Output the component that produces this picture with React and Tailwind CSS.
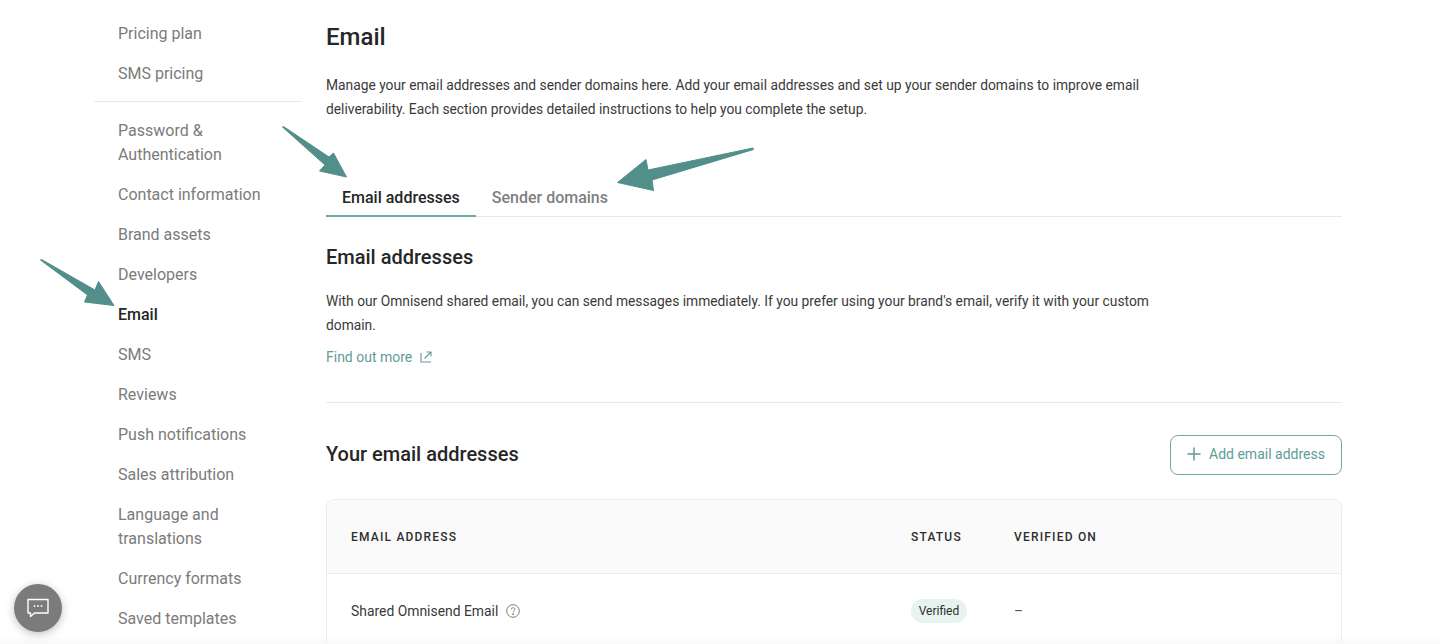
const TOP_LINKS = ['Pricing plan', 'SMS pricing']

const LINKS = [
  'Password & Authentication',
  'Contact information',
  'Brand assets',
  'Developers',
  'Email',
  'SMS',
  'Reviews',
  'Push notifications',
  'Sales attribution',
  'Language and translations',
  'Currency formats',
  'Saved templates',
]

function SideLink({ label }) {
  const active = label === 'Email'
  return (
    <a className={`block px-6 py-2 text-base leading-6 ${active ? 'font-medium text-[#262626]' : 'text-[#7b7b7b]'}`}>
      {label}
    </a>
  )
}

function Sidebar() {
  return (
    <nav className="w-[208px] ml-[94px] mr-6 shrink-0 pt-[14px]">
      {TOP_LINKS.map((l) => (
        <SideLink key={l} label={l} />
      ))}
      <div className="mt-[7px] mb-[9px] border-t border-[#e8e8e8]" />
      {LINKS.map((l) => (
        <SideLink key={l} label={l} />
      ))}
    </nav>
  )
}

function Arrows() {
  return (
    <svg className="absolute left-0 top-0 pointer-events-none" width="1440" height="644" fill="#528f8b" stroke="#528f8b" strokeWidth="1" strokeLinejoin="round">
      <path d="M282.5 127 L283.5 126.5 L329 157 L333.5 153 L346.5 177 L319.5 171 L325 165 Z" />
      <path d="M753 148 L753.5 149.5 L652 180 L653.5 190.5 L617.5 182.5 L646 159.5 L648 170 Z" />
      <path d="M40.5 260 L41.5 259.5 L95 290 L98.5 281.5 L114 305.5 L84.5 302 L87.5 295 Z" />
    </svg>
  )
}

function ChatButton() {
  return (
    <div className="absolute left-[14px] top-[584px] w-12 h-12 rounded-full bg-[#7b7b7b] shadow-[0_2px_8px_rgba(0,0,0,0.25)] flex items-center justify-center">
      <svg width="24" height="22" viewBox="0 0 24 22" fill="none" stroke="white" strokeWidth="1.4">
        <path d="M2 2.5 H22 V16 H8.5 L4.5 19.5 V16 H2 Z" strokeLinejoin="round" />
        <circle cx="8.5" cy="9" r="0.9" fill="white" stroke="none" />
        <circle cx="12" cy="9" r="0.9" fill="white" stroke="none" />
        <circle cx="15.5" cy="9" r="0.9" fill="white" stroke="none" />
      </svg>
    </div>
  )
}

function Main() {
  return (
    <main className="w-[1016px] shrink-0">
      <h1 className="mt-[19px] text-2xl leading-9 font-medium text-[#262626]">Email</h1>
      <p className="mt-[18px] w-[860px] text-[13.8px] leading-6 text-[#3a3a3a]">
        Manage your email addresses and sender domains here. Add your email addresses and set up your sender domains to improve email deliverability. Each section provides detailed instructions to help you complete the setup.
      </p>

      {/* Tabs */}
      <div className="mt-[65px] flex border-b border-[#e8e8e8]">
        <div className="px-4 pb-[5px] text-base leading-6 font-medium text-[#262626] border-b-2 border-[#6fa9a5] -mb-px">
          Email addresses
        </div>
        <div className="px-4 pb-[5px] text-base leading-6 font-medium text-[#808080]">Sender domains</div>
      </div>

      <h2 className="mt-6 text-xl leading-8 font-medium text-[#262626]">Email addresses</h2>
      <p className="mt-[16px] w-[860px] text-[13.8px] leading-6 text-[#3a3a3a]">
        With our Omnisend shared email, you can send messages immediately. If you prefer using your brand's email, verify it with your custom domain.
      </p>
      <a className="mt-2 flex items-center gap-2 text-sm leading-6 text-[#5f9c98]">
        Find out more
        <svg width="12" height="12" viewBox="0 0 12 12" fill="none" stroke="#5f9c98" strokeWidth="1.1">
          <path d="M1 2 V11 H11" />
          <path d="M4.5 7.5 L11 1 M6.5 1 H11 V5.5" />
        </svg>
      </a>

      <div className="mt-[33px] border-t border-[#e8e8e8]" />

      <div className="mt-8 flex items-center justify-between">
        <h2 className="pb-[2px] text-xl leading-8 font-medium text-[#262626]">Your email addresses</h2>
        <button className="w-[172px] h-10 pb-[2px] rounded-lg border border-[#6fa9a5] bg-white flex items-center justify-center gap-2 text-sm text-[#5f9c98]">
          <svg width="14" height="14" viewBox="0 0 14 14" stroke="#5f9c98" strokeWidth="1.5">
            <path d="M7 0.5 V13.5 M0.5 7 H13.5" />
          </svg>
          Add email address
        </button>
      </div>

      {/* Table */}
      <div className="mt-6 rounded-t-lg border border-[#ececec] bg-white">
        <div className="h-[74px] flex items-center bg-[#fafafa] border-b border-[#ececec] rounded-t-lg text-xs font-medium tracking-[1.2px] text-[#2e2e2e]">
          <div className="w-[584px] pl-6 shrink-0">EMAIL ADDRESS</div>
          <div className="w-[103px] shrink-0">STATUS</div>
          <div>VERIFIED ON</div>
        </div>
        <div className="h-[74px] flex items-center text-[13.9px] text-[#3a3a3a]">
          <div className="w-[584px] pl-6 shrink-0 flex items-center gap-2">
            Shared Omnisend Email
            <svg width="14" height="14" viewBox="0 0 14 14" fill="none" stroke="#7b7b7b" strokeWidth="1">
              <circle cx="7" cy="7" r="6.3" />
              <path d="M5.2 5.5 C5.2 3.2 8.8 3.2 8.8 5.4 C8.8 6.8 7 6.8 7 8.3" />
              <circle cx="7" cy="10.2" r="0.5" fill="#7b7b7b" />
            </svg>
          </div>
          <div className="w-[103px] shrink-0">
            <span className="inline-block h-6 w-[56px] rounded-full bg-[#e6f3ef] text-center text-xs leading-6 text-[#2e2e2e]">Verified</span>
          </div>
          <div className="text-[#555555]">–</div>
        </div>
      </div>
    </main>
  )
}

export default function App() {
  return (
    <div className="relative w-[1440px] h-[644px] overflow-hidden bg-white flex font-['Roboto',sans-serif]">
      <Sidebar />
      <Main />
      <Arrows />
      <div className="absolute left-0 right-0 bottom-0 h-2 bg-gradient-to-b from-transparent to-[#f8f8f8]" />
      <ChatButton />
    </div>
  )
}
